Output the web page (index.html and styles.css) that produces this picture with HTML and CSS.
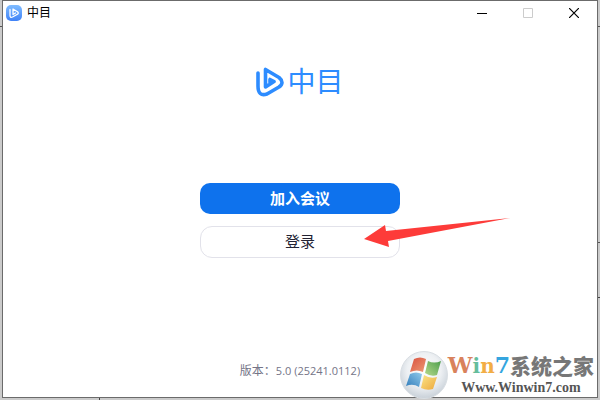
FILE: index.html
```html
<!DOCTYPE html>
<html lang="zh-CN">
<head>
    <meta charset="UTF-8">
    <meta name="viewport" content="width=device-width, initial-scale=1.0">
    <title>中目</title>
    <link rel="stylesheet" href="styles.css">
</head>
<body>
    <div class="window">
        <header class="titlebar">
            <svg class="app-icon" viewBox="0 0 16 16" aria-hidden="true">
                <defs>
                    <linearGradient id="icon-bg" x1="0" y1="0" x2="0" y2="1">
                        <stop offset="0" stop-color="#7fbcff"/>
                        <stop offset="1" stop-color="#3f82f7"/>
                    </linearGradient>
                </defs>
                <rect width="16" height="16" rx="5" fill="url(#icon-bg)"/>
                <path d="M4 4.500V10.500Q4 13 6.500 12L11.500 9.200Q13 8 11.500 6.800L7 4V9.500L9.500 8" fill="none" stroke="#fff" stroke-width="1.300" stroke-linecap="round" stroke-linejoin="round"/>
            </svg>
            <span class="title">中目</span>
            <div class="window-controls">
                <button type="button" aria-label="最小化">
                    <svg viewBox="0 0 10 10"><path d="M0 5.500H10" stroke="#000"/></svg>
                </button>
                <button type="button" aria-label="最大化" disabled>
                    <svg viewBox="0 0 10 10"><path d="M.5 .5H9.500V9.500H.5Z" stroke="#ccc"/></svg>
                </button>
                <button type="button" aria-label="关闭">
                    <svg viewBox="0 0 10 10"><path d="M0 0L10 10M10 0L0 10" stroke="#000" stroke-width="1.200"/></svg>
                </button>
            </div>
        </header>

        <main class="content">
            <div class="brand">
                <svg class="brand-mark" viewBox="0 0 28 30" aria-hidden="true">
                    <path d="M2 6V19Q2 30 11 27L23 20Q29 15.500 23 10.500L9.500 2.500V20L18 14.500L14 12.500V15.500" fill="none" stroke="#2d8cff" stroke-width="3.600" stroke-linecap="round" stroke-linejoin="round"/>
                </svg>
                <span class="brand-name">中目</span>
            </div>
            <div class="actions">
                <button type="button" class="btn btn-primary">加入会议</button>
                <button type="button" class="btn btn-outline">登录</button>
                <svg class="arrow" viewBox="0 0 146 29" aria-hidden="true">
                    <path d="M0 21L21 7L22 13L146 0L24 23L25 29Z" fill="#fd3b39"/>
                </svg>
            </div>
            <p class="version">版本：<span class="version-number">5.0 (25241.0112)</span></p>
        </main>
    </div>

    <div class="watermark">
        <svg class="orb" viewBox="0 0 48 48" aria-hidden="true">
            <defs>
                <radialGradient id="orb-bg" cx=".5" cy=".4" r=".6">
                    <stop offset="0" stop-color="#fff"/>
                    <stop offset=".6" stop-color="#edf0f3"/>
                    <stop offset="1" stop-color="#c8d0d8"/>
                </radialGradient>
                <linearGradient id="flag-red" x1="0" y1="0" x2="1" y2="1">
                    <stop offset="0" stop-color="#d9503e"/>
                    <stop offset="1" stop-color="#ed9a75"/>
                </linearGradient>
                <linearGradient id="flag-green" x1="1" y1="0" x2="0" y2="1">
                    <stop offset="0" stop-color="#4d9e4d"/>
                    <stop offset="1" stop-color="#b6d98a"/>
                </linearGradient>
                <linearGradient id="flag-blue" x1="0" y1="1" x2="1" y2="0">
                    <stop offset="0" stop-color="#337dbb"/>
                    <stop offset="1" stop-color="#91cbeb"/>
                </linearGradient>
                <linearGradient id="flag-yellow" x1="1" y1="1" x2="0" y2="0">
                    <stop offset="0" stop-color="#eda83d"/>
                    <stop offset="1" stop-color="#fbe587"/>
                </linearGradient>
            </defs>
            <circle cx="24" cy="24" r="23.500" fill="url(#orb-bg)" stroke="#d9dee3"/>
            <path d="M14 8Q20 5 26 8L23 21Q17 18 10 21Z" fill="url(#flag-red)"/>
            <path d="M28 10Q34 13 41 10L37 24Q31 26 25 22Z" fill="url(#flag-green)"/>
            <path d="M10 23Q16 20 22 23L19 36Q13 32 6 35Z" fill="url(#flag-blue)"/>
            <path d="M24 24Q30 28 37 26L33 38Q27 40 21 37Z" fill="url(#flag-yellow)"/>
        </svg>
        <div class="watermark-text">
            <div class="site-name">
                <span class="latin"><span class="w">W</span><span class="i">i</span><span class="n">n</span><span class="seven">7</span></span><span class="cjk">系统之家</span>
            </div>
            <div class="site-url">Www.Winwin7.com</div>
        </div>
    </div>
</body>
</html>
```
FILE: styles.css
```css
:root {
    --blue: #0e72ed;
    --brand: #2d8cff;
    --frame: #6b6b6b;
    --ui-font: "Noto Sans", "Noto Sans CJK SC", sans-serif;
}

* {
    box-sizing: border-box;
    margin: 0;
    padding: 0;
}

body {
    display: flex;
    min-height: 100vh;
    padding: 0 2px 2px;
    position: relative;
    font-family: var(--ui-font);
    /* edges of the windows behind this one */
    background:
        linear-gradient(#555, #555) 0 26px / 100% 1px no-repeat,
        linear-gradient(#555, #555) 100% 242px / 50% 1px no-repeat,
        linear-gradient(#444, #444) 100% 297px / 50% 1px no-repeat,
        linear-gradient(#444, #444) 99px 100% / 1px 3px no-repeat,
        #cbcbcb;
}

.window {
    flex: 1;
    display: flex;
    flex-direction: column;
    background: #fff;
    border: 1px solid var(--frame);
}

.titlebar {
    display: flex;
    align-items: center;
    height: 24px;
    padding-left: 3px;
}

.app-icon {
    width: 16px;
    height: 16px;
}

.title {
    margin-left: 5px;
    font-size: 12px;
    line-height: 16px;
    color: #000;
}

.window-controls {
    display: flex;
    height: 100%;
    margin-left: auto;
}

.window-controls button {
    display: flex;
    align-items: center;
    justify-content: center;
    width: 46px;
    border: none;
    background: transparent;
}

.window-controls svg {
    width: 10px;
    height: 10px;
    fill: none;
}

.content {
    flex: 1;
    display: flex;
    flex-direction: column;
    align-items: center;
    padding: 39px 20px 16px;
}

.brand {
    display: flex;
    align-items: flex-start;
    gap: 3px;
    height: 36px;
}

.brand-mark {
    align-self: center;
    width: 28px;
    height: 30px;
}

.brand-name {
    font-family: "Noto Sans CJK SC", sans-serif;
    font-size: 28px;
    font-weight: 400;
    line-height: 32px;
    color: var(--brand);
}

.actions {
    display: flex;
    flex-direction: column;
    gap: 12px;
    width: 33%;
    min-width: 200px;
    margin-top: 83px;
    position: relative;
}

.btn {
    height: 31px;
    padding-bottom: 2px;
    border-radius: 10px;
    font-family: var(--ui-font);
    font-size: 15px;
    line-height: 20px;
}

.btn-primary {
    border: none;
    background: var(--blue);
    color: #fff;
    font-weight: 700;
}

.btn-outline {
    height: 32px;
    border: 1px solid #e2e2ea;
    border-radius: 12px;
    background: #fff;
    color: #232333;
}

.arrow {
    position: absolute;
    left: 164px;
    top: 35px;
    width: 146px;
    height: 29px;
}

.version {
    margin-top: auto;
    font-family: "Open Sans", "Noto Sans CJK SC", sans-serif;
    font-size: 12px;
    line-height: 20px;
    color: #747487;
}

.version-number {
    font-size: 11px;
}

.watermark {
    position: absolute;
    right: 6px;
    bottom: 1px;
    display: flex;
    align-items: center;
}

.orb {
    width: 48px;
    height: 48px;
}

.watermark-text {
    display: flex;
    flex-direction: column;
    align-items: center;
}

.site-name {
    display: flex;
    align-items: center;
    height: 26px;
    line-height: 26px;
    font-weight: 700;
}

.latin {
    font-family: "DejaVu Serif", serif;
    font-size: 20px;
}

.w {
    font-size: 22px;
    color: #d9825c;
}

.i {
    color: #65bd9c;
}

.n {
    color: #f2ad45;
}

.seven {
    font-size: 22px;
    color: #35a5df;
}

.cjk {
    font-family: "Noto Sans CJK SC", sans-serif;
    font-size: 21px;
    font-weight: 900;
    color: #777;
}

.site-url {
    font-family: "Liberation Serif", serif;
    font-size: 14px;
    font-weight: 700;
    line-height: 20px;
    color: #555;
}
```
